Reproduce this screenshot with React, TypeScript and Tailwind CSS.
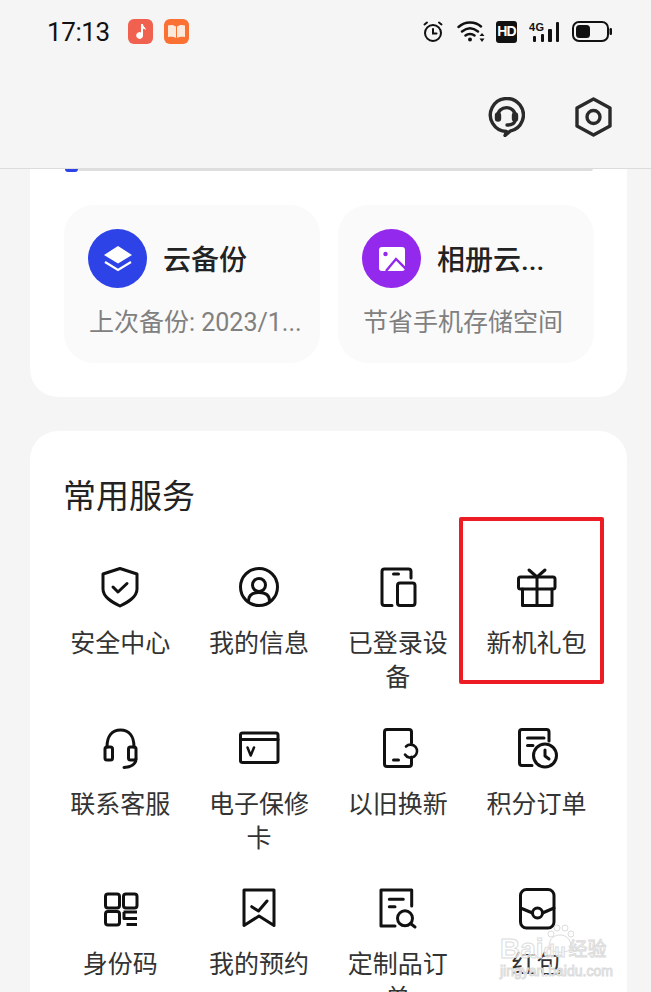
import type { ReactNode } from "react";

const Line = ({ children, w = 3 }: { children: ReactNode; w?: number }) => (
  <svg width="40" height="40" viewBox="0 0 40 40" fill="none" stroke="#111" strokeWidth={w} strokeLinecap="round" strokeLinejoin="round" className="overflow-visible">
    {children}
  </svg>
);

const services: { label: string; icon: ReactNode }[] = [
  {
    label: "安全中心",
    icon: (
      <Line>
        <path d="M20 1.5 L37 7 V22 C37 30 28 35 20 39 C12 35 3 30 3 22 V7 Z" />
        <path d="M13 20 L18 25 L27 16.5" />
      </Line>
    ),
  },
  {
    label: "我的信息",
    icon: (
      <Line>
        <circle cx="20" cy="20" r="18.5" />
        <circle cx="20" cy="18" r="6.5" />
        <path d="M9.5 34 C9.5 28 13 25.5 20 25.5 C27 25.5 30.5 28 30.5 34" />
      </Line>
    ),
  },
  {
    label: "已登录设备",
    icon: (
      <Line>
        <path d="M33 11 V4.5 Q33 2 30.5 2 H6.5 Q4 2 4 4.5 V36 Q4 38.5 6.5 38.5 H14" />
        <rect x="19.5" y="16" width="17.5" height="22.5" rx="2.5" />
        <path d="M15.5 7 H20.5" />
      </Line>
    ),
  },
  {
    label: "新机礼包",
    icon: (
      <Line>
        <path d="M12 3 L20 10 L28 3" />
        <rect x="1.5" y="10" width="36.5" height="12" rx="2" />
        <path d="M5.5 22 V38.5 H35 V22 M20 10 V38.5" />
      </Line>
    ),
  },
  {
    label: "联系客服",
    icon: (
      <Line>
        <path d="M7 19 C7 8 12 2 20.5 2 C29 2 34 8 34 19" />
        <rect x="5" y="19" width="7.5" height="13" rx="2" />
        <rect x="28.5" y="19" width="7.5" height="13" rx="2" />
        <path d="M36 31 C36 36 31 39 24 39.5" />
      </Line>
    ),
  },
  {
    label: "电子保修卡",
    icon: (
      <Line>
        <rect x="1.5" y="5" width="37.5" height="29.5" rx="2" />
        <path d="M2 11.5 H39" />
        <path d="M8.5 19.5 L11.7 27.5 L15 19.5" strokeWidth="2.5" />
      </Line>
    ),
  },
  {
    label: "以旧换新",
    icon: (
      <Line>
        <path d="M33.5 15 V4 Q33.5 1.5 31 1.5 H9 Q6.5 1.5 6.5 4 V36 Q6.5 38.5 9 38.5 H31 Q33.5 38.5 33.5 36 V29" />
        <path d="M15.5 32 H20.5" />
        <path d="M27 26.5 A6.5 6.5 0 1 0 28 18.5" strokeWidth="2.6" />
      </Line>
    ),
  },
  {
    label: "积分订单",
    icon: (
      <Line>
        <path d="M32 13 V4 Q32 1.5 29.5 1.5 H5 Q2.5 1.5 2.5 4 V35 Q2.5 37.5 5 37.5 H15" />
        <path d="M10.5 10 H27 M10.5 17.5 H16" />
        <circle cx="28" cy="27.5" r="11.5" />
        <path d="M28 22 V28 L32 31" />
      </Line>
    ),
  },
  {
    label: "身份码",
    icon: (
      <Line>
        <rect x="5.5" y="6" width="14" height="14" rx="2.5" />
        <rect x="23.5" y="6" width="13.5" height="14" rx="2.5" />
        <rect x="5.5" y="23.5" width="14" height="13.5" rx="2.5" />
        <path d="M23.5 24 H37 M24 24 V30.5 H37 M26.5 36.5 H37" strokeLinecap="butt" />
      </Line>
    ),
  },
  {
    label: "我的预约",
    icon: (
      <Line>
        <path d="M5 2 H35 V37.5 L20 28 L5 37.5 Z" />
        <path d="M12.7 18.7 L19.5 23 L28 13" />
      </Line>
    ),
  },
  {
    label: "定制品订单",
    icon: (
      <Line>
        <path d="M33.7 18 V2 H3 V38 H17" />
        <path d="M11.3 11.3 H25.3 M11.3 18.7 H17" />
        <circle cx="27" cy="30.3" r="7.5" />
        <path d="M32.5 35.5 L37 39" />
      </Line>
    ),
  },
  {
    label: "红包",
    icon: (
      <Line>
        <rect x="3.5" y="1.5" width="33.5" height="38.5" rx="6" />
        <circle cx="20.5" cy="25" r="5" />
        <path d="M3.5 20 L15.5 25 M25.5 25 L37 20" />
      </Line>
    ),
  },
];

const StatusIcons = () => (
  <div className="ml-auto flex items-center">
    <svg width="20" height="21" viewBox="0 0 20 21" fill="none" stroke="#111" strokeWidth="2" strokeLinecap="round">
      <circle cx="10" cy="12" r="8" />
      <path d="M10 8 V12.5 H13.5 M1.5 3.5 L4 1.5 M18.5 3.5 L16 1.5" />
    </svg>
    <svg className="ml-[14px]" width="28" height="23" viewBox="0 0 28 23" fill="none" stroke="#111" strokeWidth="2.4" strokeLinecap="round">
      <path d="M1.5 7 C8 1 18 1 24 6.5 M5 11.5 C10 7.5 16 7.5 21 11.5 M8.5 15.5 C11 13.5 15 13.5 17.5 15.5" />
      <circle cx="13" cy="19.5" r="2" fill="#111" stroke="none" />
      <path d="M25 13 L27.5 16 H22.5 Z M25 22 L27.5 18.5 H22.5 Z" fill="#111" stroke="none" />
    </svg>
    <span className="ml-[11px] flex h-[22px] w-[21px] items-center justify-center rounded-[3px] bg-[#111] font-['Liberation_Sans',sans-serif] text-[14px] font-bold tracking-[-0.8px] text-white">
      HD
    </span>
    <svg className="ml-[12px]" width="30" height="22" viewBox="0 0 30 22" fill="#111">
      <text x="0" y="9.5" fontSize="11" fontWeight="700" fontFamily="Liberation Sans, sans-serif" textLength="15">
        4G
      </text>
      <rect x="4" y="15" width="3" height="6" rx="1" />
      <rect x="12" y="13" width="3" height="8" rx="1" />
      <rect x="19" y="8" width="4" height="13" rx="1" />
      <rect x="27" y="1" width="3" height="20" rx="1" />
    </svg>
    <svg className="ml-[13px]" width="40" height="21" viewBox="0 0 40 21" fill="none">
      <rect x="1" y="1" width="35" height="19" rx="6" stroke="#111" strokeWidth="2" />
      <rect x="4" y="4" width="14" height="13" rx="3.5" fill="#111" />
      <rect x="37.5" y="7" width="2.5" height="7" rx="1.2" fill="#111" />
    </svg>
  </div>
);

const Tile = ({ icon, bg, title, sub }: { icon: ReactNode; bg: string; title: string; sub: string }) => (
  <div className="h-[158px] w-[256px] rounded-[30px] bg-[#fafafa] pl-[24px] pt-[24px]">
    <div className="flex items-center">
      <div className={`flex h-[59px] w-[59px] items-center justify-center rounded-full ${bg}`}>{icon}</div>
      <span className="ml-[16px] mt-[4px] text-[28px] font-medium leading-[40px] text-[#222]">{title}</span>
    </div>
    <p className="ml-[1px] mt-[17px] whitespace-nowrap text-[25px] leading-[36px] text-[#808080]">{sub}</p>
  </div>
);

export default function App() {
  return (
    <div className="relative h-[992px] w-[651px] overflow-hidden bg-[#f5f5f5] font-['Roboto','Noto_Sans_CJK_SC',sans-serif]">
      <header className="flex h-[169px] flex-col border-b border-[#dcdcdc]">
        <div className="ml-[47px] mr-[39px] mt-[19px] flex h-[25px] items-center">
          <span className="mt-[2px] w-[81px] text-[26px] font-normal leading-[25px] tracking-[-0.4px] text-[#111]">17:13</span>
          <span className="flex h-[25px] w-[25px] items-center justify-center rounded-[6px] bg-[#f0614f]">
            <svg width="15" height="17" viewBox="0 0 15 17" fill="#fff">
              <path d="M8 1 H10 C10 4 13 4.5 13 7 C11.5 6 10.5 5.8 10 5.8 V12.5 A3.4 3.4 0 1 1 8 9.4 Z" />
            </svg>
          </span>
          <span className="ml-[11px] flex h-[25px] w-[25px] items-center justify-center rounded-[6px] bg-[#fb7033]">
            <svg width="19" height="15" viewBox="0 0 19 15" fill="#fbe9dc">
              <path d="M1 1.5 C4 0.5 7 1 9 2.5 V14 C7 12.8 4 12.3 1 13 Z" />
              <path d="M18 1.5 C15 0.5 12 1 10 2.5 V14 C12 12.8 15 12.3 18 13 Z" />
            </svg>
          </span>
          <StatusIcons />
        </div>
        <div className="mr-[39px] mt-[53px] flex items-center justify-end">
          <svg width="37" height="40" viewBox="0 0 37 40" fill="none" stroke="#2a2a2a" strokeWidth="3.4" strokeLinecap="round" strokeLinejoin="round">
            <path d="M18.5 34.5 A16.5 16.5 0 1 1 22 34.2 L17 38.5 Z" />
            <path d="M9.5 20 C9.5 7.5 27.5 7.5 27.5 20" />
            <rect x="8.5" y="17" width="3" height="6" rx="1.5" fill="#2a2a2a" />
            <rect x="25.5" y="17" width="3" height="6" rx="1.5" fill="#2a2a2a" />
            <path d="M27 24 C26 27 23 28 19 28" />
          </svg>
          <svg className="ml-[50px]" width="37" height="40" viewBox="0 0 37 40" fill="none" stroke="#2a2a2a" strokeWidth="3.4" strokeLinejoin="round">
            <path d="M18.5 2 L35 11 V29 L18.5 38 L2 29 V11 Z" />
            <circle cx="18.5" cy="20" r="6.5" />
          </svg>
        </div>
      </header>

      <main className="px-[30px]">
        <section className="h-[228px] w-[597px] rounded-b-[28px] bg-white">
          <div className="ml-[35px] flex h-[2px] w-[528px]">
            <div className="h-[3px] w-[13px] rounded-b-[7px] bg-[#2d43e8]" />
            <div className="h-[2px] flex-1 rounded-b bg-[#dedede]" />
          </div>
          <div className="mt-[34px] flex gap-[18px] pl-[34px]">
            <Tile
              bg="bg-[#2d43e8]"
              title="云备份"
              sub="上次备份: 2023/1..."
              icon={
                <svg width="30" height="28" viewBox="0 0 30 28" fill="#fff">
                  <path d="M15 1 L29 10 L15 18.5 L1 10 Z" />
                  <path d="M2 17 L15 25 L28 17" fill="none" stroke="#fff" strokeWidth="2.2" />
                </svg>
              }
            />
            <Tile
              bg="bg-[#9329ec]"
              title="相册云..."
              sub="节省手机存储空间"
              icon={
                <svg width="26" height="24" viewBox="0 0 26 24">
                  <rect width="26" height="24" rx="3" fill="#fff" />
                  <circle cx="6.5" cy="7" r="2.2" fill="#9329ec" />
                  <path d="M7 24 L17 12 L27 22" fill="none" stroke="#9329ec" strokeWidth="2.4" />
                </svg>
              }
            />
          </div>
        </section>

        <section className="mt-[34px] h-[640px] w-[597px] rounded-[28px] bg-white pt-[44px]">
          <h2 className="ml-[33px] text-[33px] font-normal leading-[44px] text-[#222]">常用服务</h2>
          <div className="ml-[21px] mt-[48px] grid w-[555px] grid-cols-4 auto-rows-[160.5px]">
            {services.map((s) => (
              <div key={s.label} className="flex flex-col items-center">
                {s.icon}
                <p className="mt-[20px] w-[102px] text-center text-[25px] leading-[34px] text-[#333]">{s.label}</p>
              </div>
            ))}
          </div>
        </section>
      </main>

      {/* red marker drawn over the screenshot */}
      <div className="absolute left-[459px] top-[517px] h-[167px] w-[145px] rounded-[2px] border-[4px] border-[#ed1c24]" />

      {/* watermark */}
      <div className="pointer-events-none absolute left-[500px] top-[923px] w-[118px] font-['Liberation_Sans','Noto_Sans_CJK_SC',sans-serif] text-white/70 [-webkit-text-stroke:1px_#dcdcdc]">
        <svg className="absolute left-[46px] top-0" width="28" height="32" viewBox="0 0 28 32" fill="#fff" fillOpacity="0.7" stroke="#dcdcdc">
          <circle cx="5" cy="11" r="3" />
          <circle cx="11" cy="5" r="3" />
          <circle cx="19" cy="5" r="3" />
          <circle cx="25" cy="11" r="3" />
          <path d="M3 24 C3 15 9 12 14 12 C19 12 25 15 25 24 C25 31 3 31 3 24 Z" />
        </svg>
        <div className="relative mt-[13px] flex items-end whitespace-nowrap">
          <span className="text-[28px] font-bold leading-[26px]">Bai</span>
          <span className="text-[18px] font-bold leading-[22px]">du</span>
          <span className="ml-[3px] text-[19px] leading-[24px]">经验</span>
        </div>
        <div className="mt-[1px] whitespace-nowrap text-[14px] leading-[16px]">jingyan.baidu.com</div>
      </div>
    </div>
  );
}
